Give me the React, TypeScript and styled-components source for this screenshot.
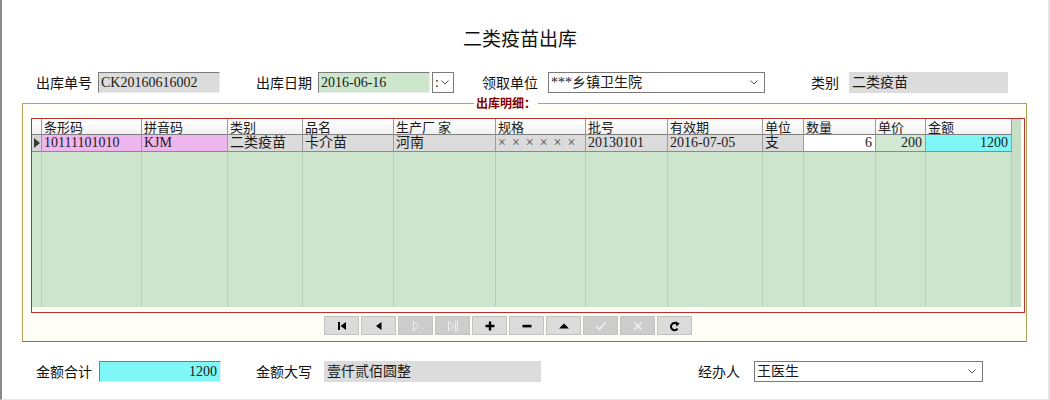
import React from 'react';
import styled, { createGlobalStyle, css } from 'styled-components';

const CJK = `"Noto Sans CJK SC", "Liberation Sans", sans-serif`;
const DATA = `"Liberation Serif", "Noto Sans CJK SC", serif`;

const GlobalStyle = createGlobalStyle`
  html, body {
    margin: 0;
    padding: 0;
    background: #fff;
  }
  body {
    font-family: ${DATA};
    font-size: 14px;
    color: #1a1a1a;
  }
  * {
    box-sizing: border-box;
  }
`;

type Col = {
  title: string;
  width: number;
  value: string;
  bg: string;
  right?: boolean;
  wide?: boolean;
};

const COLUMNS: Col[] = [
  { title: '条形码', width: 100, value: '10111101010', bg: '#efb5ef' },
  { title: '拼音码', width: 86, value: 'KJM', bg: '#efb5ef' },
  { title: '类别', width: 75, value: '二类疫苗', bg: '#dbdbdb' },
  { title: '品名', width: 91, value: '卡介苗', bg: '#dbdbdb' },
  { title: '生产厂 家', width: 102, value: '河南', bg: '#dbdbdb' },
  { title: '规格', width: 90, value: '××××××', bg: '#dbdbdb', wide: true },
  { title: '批号', width: 82, value: '20130101', bg: '#dbdbdb' },
  { title: '有效期', width: 95, value: '2016-07-05', bg: '#dbdbdb' },
  { title: '单位', width: 41, value: '支', bg: '#dbdbdb' },
  { title: '数量', width: 72, value: '6', bg: '#ffffff', right: true },
  { title: '单价', width: 50, value: '200', bg: '#d3e8d3', right: true },
  { title: '金额', width: 86, value: '1200', bg: '#80f7f7', right: true },
];

const TEMPLATE = `10px ${COLUMNS.map((c) => `${c.width}px`).join(' ')} 1fr`;

const Chevron = () => (
  <svg width="8" height="5" viewBox="0 0 8 5">
    <polyline points="0.5,0.5 4,4 7.5,0.5" fill="none" stroke="#555" strokeWidth="1" />
  </svg>
);

type NavKind = 'first' | 'prior' | 'next' | 'last' | 'insert' | 'delete' | 'edit' | 'post' | 'cancel' | 'refresh';

const NAV: { kind: NavKind; disabled?: boolean }[] = [
  { kind: 'first' },
  { kind: 'prior' },
  { kind: 'next', disabled: true },
  { kind: 'last', disabled: true },
  { kind: 'insert' },
  { kind: 'delete' },
  { kind: 'edit' },
  { kind: 'post', disabled: true },
  { kind: 'cancel', disabled: true },
  { kind: 'refresh' },
];

const NavGlyph = ({ kind }: { kind: NavKind }) => {
  switch (kind) {
    case 'first':
      return (
        <svg width="12" height="12" viewBox="0 0 12 12" fill="currentColor">
          <rect x="2" y="2" width="2" height="8" />
          <polygon points="10,2 4.5,6 10,10" />
        </svg>
      );
    case 'prior':
      return (
        <svg width="12" height="12" viewBox="0 0 12 12" fill="currentColor">
          <polygon points="8.5,2 3,6 8.5,10" />
        </svg>
      );
    case 'next':
      return (
        <svg width="12" height="12" viewBox="0 0 12 12" fill="none" stroke="currentColor">
          <polygon points="3.5,1.5 9,6 3.5,10.5" />
        </svg>
      );
    case 'last':
      return (
        <svg width="14" height="12" viewBox="0 0 14 12" fill="none" stroke="currentColor">
          <polygon points="2.5,1.5 8,6 2.5,10.5" />
          <rect x="9.5" y="1.5" width="2" height="9" />
        </svg>
      );
    case 'insert':
      return (
        <svg width="12" height="12" viewBox="0 0 12 12" fill="currentColor">
          <path d="M4.8 1.5h2.4v3.3h3.3v2.4H7.2v3.3H4.8V7.2H1.5V4.8h3.3z" />
        </svg>
      );
    case 'delete':
      return (
        <svg width="12" height="12" viewBox="0 0 12 12" fill="currentColor">
          <rect x="1.5" y="4.8" width="9" height="2.6" />
        </svg>
      );
    case 'edit':
      return (
        <svg width="12" height="12" viewBox="0 0 12 12" fill="currentColor">
          <polygon points="1,8.5 6,3.5 11,8.5" />
        </svg>
      );
    case 'post':
      return (
        <svg width="12" height="12" viewBox="0 0 12 12" fill="none" stroke="currentColor" strokeWidth="1.6">
          <polyline points="1.5,6.5 4.5,9.5 10.5,2" />
        </svg>
      );
    case 'cancel':
      return (
        <svg width="12" height="12" viewBox="0 0 12 12" fill="none" stroke="currentColor" strokeWidth="1.6">
          <path d="M2.5 2.5l7 7M9.5 2.5l-7 7" />
        </svg>
      );
    case 'refresh':
      return (
        <svg width="12" height="12" viewBox="0 0 12 12">
          <path d="M8.3 4.2A3.6 3.6 0 1 0 8.6 8.6" fill="none" stroke="currentColor" strokeWidth="2" />
          <polygon points="6.2,1.2 10.6,3.4 7.6,6.4" fill="currentColor" />
        </svg>
      );
  }
};

const App = (): JSX.Element => {
  return (
    <>
      <GlobalStyle />
      <Window>
        <Title>二类疫苗出库</Title>

        <FormRow $top={22}>
          <FieldGroup $w={220} $gap={6}>
            <Label>出库单号</Label>
            <TextBox $w={122} $bg="#dcdcdc" $sunken>
              CK20160616002
            </TextBox>
          </FieldGroup>
          <FieldGroup $w={226} $gap={6}>
            <Label>出库日期</Label>
            <DatePicker>
              <TextBox $w={112} $bg="#cde7cd" $sunken>
                2016-06-16
              </TextBox>
              <DateButton>
                <span>:</span>
                <Chevron />
              </DateButton>
            </DatePicker>
          </FieldGroup>
          <FieldGroup $w={329} $gap={10}>
            <Label>领取单位</Label>
            <Combo $w={217}>
              <span>***乡镇卫生院</span>
              <Chevron />
            </Combo>
          </FieldGroup>
          <FieldGroup $gap={10}>
            <Label>类别</Label>
            <TextBox $w={159} $bg="#dcdcdc">
              二类疫苗
            </TextBox>
          </FieldGroup>
        </FormRow>

        <GroupBox>
          <GroupTitle>出库明细：</GroupTitle>
          <GridFrame>
            <GridBody>
              <GridRow>
                <HeaderCell />
                {COLUMNS.map((c) => (
                  <HeaderCell key={c.title}>{c.title}</HeaderCell>
                ))}
                <Gutter />
              </GridRow>
              <GridRow>
                <DataCell $bg="#d6d6d6">
                  <svg width="6" height="10" viewBox="0 0 6 10">
                    <polygon points="0,0 6,5 0,10" fill="#3a3a3a" />
                  </svg>
                </DataCell>
                {COLUMNS.map((c) => (
                  <DataCell key={c.title} $bg={c.bg} $right={c.right} $wide={c.wide}>
                    {c.value}
                  </DataCell>
                ))}
                <Gutter />
              </GridRow>
              <FillerRow>
                <FillerCell />
                {COLUMNS.map((c) => (
                  <FillerCell key={c.title} />
                ))}
                <Gutter />
              </FillerRow>
            </GridBody>
          </GridFrame>

          <NavBar>
            {NAV.map((n) => (
              <NavButton key={n.kind} $disabled={n.disabled}>
                <NavGlyph kind={n.kind} />
              </NavButton>
            ))}
          </NavBar>
        </GroupBox>

        <FormRow $top={19}>
          <FieldGroup $w={220} $gap={7}>
            <Label>金额合计</Label>
            <TextBox $w={122} $bg="#80f7f7" $sunken $right>
              1200
            </TextBox>
          </FieldGroup>
          <FieldGroup $w={442} $gap={12}>
            <Label>金额大写</Label>
            <TextBox $w={217} $bg="#dcdcdc">
              壹仟贰佰圆整
            </TextBox>
          </FieldGroup>
          <FieldGroup $gap={14}>
            <Label>经办人</Label>
            <Combo $w={229}>
              <span>王医生</span>
              <Chevron />
            </Combo>
          </FieldGroup>
        </FormRow>
      </Window>
    </>
  );
};

export default App;

const Window = styled.div`
  width: 1050px;
  height: 400px;
  display: flex;
  flex-direction: column;
  background: #fff;
  border-left: 2px solid #8a8a8a;
  border-right: 2px solid #e3e3e3;
  border-bottom: 1px solid #e6e6e6;
  overflow: hidden;
`;

const Title = styled.h1`
  margin: 26px 10px 0 0;
  height: 24px;
  font: 400 19px/24px ${CJK};
  text-align: center;
  color: #111;
`;

const FormRow = styled.div<{ $top: number }>`
  display: flex;
  align-items: center;
  height: 21px;
  margin-top: ${({ $top }) => $top}px;
  padding-left: 34px;
`;

const FieldGroup = styled.div<{ $w?: number; $gap: number }>`
  display: flex;
  align-items: center;
  flex: none;
  width: ${({ $w }) => ($w ? `${$w}px` : 'auto')};
  gap: ${({ $gap }) => $gap}px;
`;

const Label = styled.span`
  font: 14px/21px ${CJK};
  color: #111;
  white-space: nowrap;
`;

const TextBox = styled.div<{ $w: number; $bg: string; $sunken?: boolean; $right?: boolean }>`
  width: ${({ $w }) => $w}px;
  height: 21px;
  padding: 0 ${({ $right }) => ($right ? '3px' : '0')} 0 2px;
  border: 1px solid transparent;
  background: ${({ $bg }) => $bg};
  font: 14px/19px ${DATA};
  color: #1a1a1a;
  text-align: ${({ $right }) => ($right ? 'right' : 'left')};
  white-space: nowrap;
  overflow: hidden;
  ${({ $sunken }) =>
    $sunken &&
    css`
      border-color: #7c7c7c #ececec #ececec #7c7c7c;
    `}
`;

const DatePicker = styled.div`
  display: flex;
  align-items: center;
  gap: 2px;
`;

const DateButton = styled.div`
  width: 22px;
  height: 21px;
  display: flex;
  align-items: center;
  gap: 2px;
  padding-left: 2px;
  background: #fff;
  border: 1px solid #7a7a7a;
  font: 14px/19px ${DATA};
`;

const Combo = styled.div<{ $w: number }>`
  width: ${({ $w }) => $w}px;
  height: 21px;
  display: flex;
  align-items: center;
  justify-content: space-between;
  padding: 0 6px 0 2px;
  background: #fff;
  border: 1px solid #7a7a7a;
  font: 14px/19px ${DATA};
  color: #1a1a1a;
`;

const GroupBox = styled.fieldset`
  width: 1005px;
  min-width: 0;
  margin: 2px 0 0 20px;
  padding: 0 1px 6px 0;
  border: 1px solid #b3a45c;
  border-bottom-color: #7d7d3e;
  background: #fefef6;
`;

const GroupTitle = styled.legend`
  margin-left: 451px;
  padding: 0 2px;
  font: bold 12px/16px ${CJK};
  color: #800000;
`;

const GridFrame = styled.div`
  height: 195px;
  margin: 7px 0 0 8px;
  padding: 0 3px 5px 0;
  border: 1px solid #b8312f;
`;

const GridBody = styled.div`
  height: 100%;
  display: flex;
  flex-direction: column;
  background: #cce5cc;
  font: 14px/16px ${DATA};
`;

const GridRow = styled.div`
  display: grid;
  grid-template-columns: ${TEMPLATE};
`;

const HeaderCell = styled.div`
  height: 16px;
  padding-left: 2px;
  border-right: 1px solid #9c9c9c;
  border-bottom: 1px solid #7f7f7f;
  background: linear-gradient(#ffffff, #f1f1f1);
  font: 13px/15px ${CJK};
  white-space: nowrap;
`;

const DataCell = styled.div<{ $bg: string; $right?: boolean; $wide?: boolean }>`
  height: 17px;
  display: flex;
  align-items: center;
  justify-content: ${({ $right }) => ($right ? 'flex-end' : 'flex-start')};
  padding: 0 ${({ $right }) => ($right ? '3px' : '0')} 0 2px;
  border-right: 1px solid #9c9c9c;
  border-bottom: 1px solid #8a8a8a;
  background: ${({ $bg }) => $bg};
  white-space: nowrap;
  ${({ $wide }) =>
    $wide &&
    css`
      letter-spacing: 6px;
      color: #444;
    `}
`;

const Gutter = styled.div`
  background: #c7dfc7;
`;

const FillerRow = styled(GridRow)`
  flex: 1;
`;

const FillerCell = styled.div`
  border-right: 1px solid #b6cfb6;
`;

const NavBar = styled.div`
  display: flex;
  gap: 2px;
  margin: 3px 0 0 301px;
`;

const NavButton = styled.button<{ $disabled?: boolean }>`
  width: 35px;
  height: 19px;
  padding: 0;
  display: flex;
  align-items: center;
  justify-content: center;
  border: 1px solid #c2c2c2;
  background: ${({ $disabled }) => ($disabled ? '#cdcdcd' : '#dbdbdb')};
  color: ${({ $disabled }) => ($disabled ? '#eeeeee' : '#000')};
`;
